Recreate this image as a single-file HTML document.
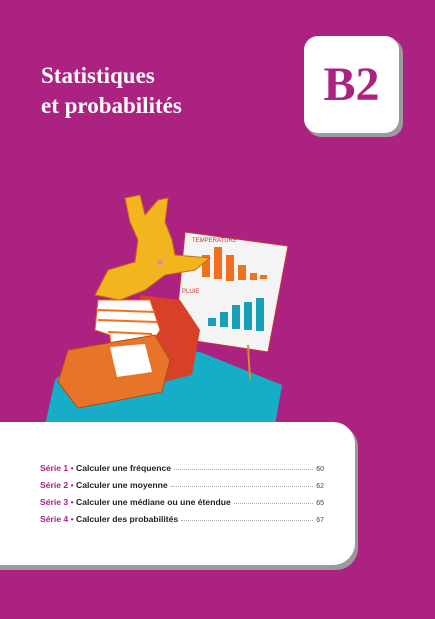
<!DOCTYPE html>
<html><head><meta charset="utf-8"><style>
html,body{margin:0;padding:0}
body{width:435px;height:619px;background:#ab2281;position:relative;overflow:hidden;font-family:"Liberation Sans","DejaVu Sans",sans-serif}
.title{position:absolute;left:41px;top:61px;color:#fff;font-family:"Liberation Serif",serif;font-weight:bold;font-size:23px;line-height:30px}
.b2sh{position:absolute;left:307px;top:39px;width:96px;height:98px;border-radius:14px;background:#9b9b9b}
.b2{position:absolute;left:304px;top:36px;width:95px;height:97px;border-radius:14px;background:#fff;color:#ab2281;font-family:"Liberation Serif",serif;font-weight:bold;font-size:48px;line-height:97px;text-align:center}
.boxsh{position:absolute;left:-20px;top:425px;width:378px;height:145px;border-radius:0 22px 22px 0;background:#9a9a9a}
.box{position:absolute;left:-20px;top:422px;width:375px;height:143px;border-radius:0 22px 22px 0;background:#fff}
.row{position:absolute;left:40px;width:284px;font-size:8.6px;font-weight:bold;color:#222;display:flex;align-items:baseline;white-space:nowrap}
.row .s{color:#ab2281}
.row .d{flex:1;border-bottom:1px dotted #aaa;margin:0 3px;height:0;position:relative;top:-1px}
.row .p{font-weight:normal;color:#444;font-size:7px}
</style></head><body>
<div class="title">Statistiques<br>et probabilités</div>
<div class="b2sh"></div><div class="b2">B2</div>
<svg style="position:absolute;left:0;top:0" width="435" height="430">
<polygon points="90,345 200,352 282,385 275,425 45,425 55,380" fill="#16aec6"/>
<polygon points="185,232 288,246 268,352 175,338" fill="#f4f4f4" stroke="#c33" stroke-width="1"/>
<line x1="248" y1="345" x2="250" y2="380" stroke="#d88a2a" stroke-width="2"/>
<text x="192" y="242" font-size="6" fill="#c33" font-family="Liberation Sans">TEMPERATURE</text>
<g fill="#f07020"><rect x="190" y="257" width="8" height="8"/><rect x="202" y="255" width="8" height="22"/><rect x="214" y="247" width="8" height="32"/><rect x="226" y="255" width="8" height="26"/><rect x="238" y="265" width="8" height="15"/><rect x="250" y="273" width="7" height="7"/><rect x="260" y="275" width="7" height="4"/></g>
<text x="182" y="293" font-size="6" fill="#c33" font-family="Liberation Sans">PLUIE</text>
<g fill="#1a9fb8"><rect x="208" y="318" width="8" height="8"/><rect x="220" y="312" width="8" height="15"/><rect x="232" y="305" width="8" height="24"/><rect x="244" y="302" width="8" height="28"/><rect x="256" y="298" width="8" height="33"/></g>
<path d="M140,295 L180,300 L200,330 L192,375 L150,385 Z" fill="#d8402a"/>
<path d="M98,300 L150,300 L160,330 L150,345 L145,365 L112,362 L110,335 L95,330 Z" fill="#fff" stroke="#f06020"/>
<g stroke="#f07020" stroke-width="2"><line x1="98" y1="310" x2="155" y2="312"/><line x1="98" y1="320" x2="157" y2="322"/><line x1="108" y1="332" x2="152" y2="334"/><line x1="110" y1="343" x2="148" y2="345"/><line x1="112" y1="354" x2="146" y2="356"/></g>
<path d="M125,198 L140,195 L145,215 L158,200 L168,198 L165,222 L172,240 L175,255 L210,258 L195,270 L165,275 L145,290 L120,300 L95,295 L108,270 L135,262 L138,240 L130,222 Z" fill="#f2b51e" stroke="#c0701a" stroke-width="1"/>
<circle cx="160" cy="262" r="3" fill="#e98a8a"/>
<path d="M68,350 L155,335 L170,360 L162,392 L78,408 L58,382 Z" fill="#e8742a" stroke="#b04a15"/>
<path d="M110,347 L145,344 L152,372 L117,377 Z" fill="#fff"/>
</svg>
<div class="boxsh"></div><div class="box"></div>
<div class="row" style="top:463px"><span class="s">Série 1</span>&nbsp;<span class="s">•</span>&nbsp;Calculer une fréquence<span class="d"></span><span class="p">60</span></div>
<div class="row" style="top:480px"><span class="s">Série 2</span>&nbsp;<span class="s">•</span>&nbsp;Calculer une moyenne<span class="d"></span><span class="p">62</span></div>
<div class="row" style="top:497px"><span class="s">Série 3</span>&nbsp;<span class="s">•</span>&nbsp;Calculer une médiane ou une étendue<span class="d"></span><span class="p">65</span></div>
<div class="row" style="top:514px"><span class="s">Série 4</span>&nbsp;<span class="s">•</span>&nbsp;Calculer des probabilités<span class="d"></span><span class="p">67</span></div>
</body></html>
